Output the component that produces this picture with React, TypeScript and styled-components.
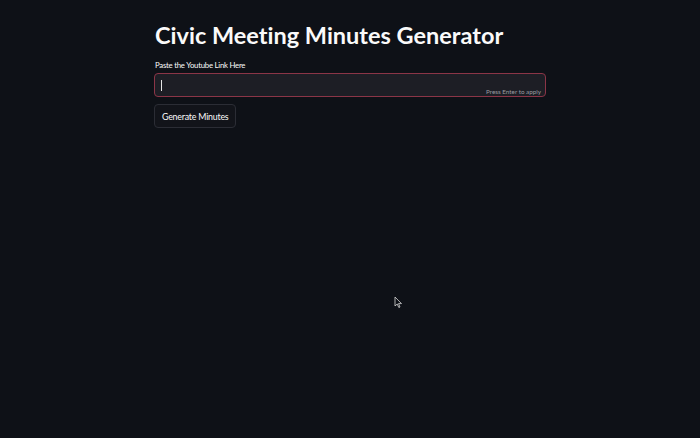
import React from "react";
import styled, { createGlobalStyle } from "styled-components";

const Global = createGlobalStyle`
  html, body { margin: 0; padding: 0; background: #0e1117; }
  body { width: 700px; height: 438px; overflow: hidden; font-family: "Lato", "Open Sans", sans-serif; color: #fafafa; font-variant-ligatures: none; }
`;

const Page = styled.div`
  position: relative;
  width: 700px;
  height: 438px;
  background: #0e1117;
  display: flex;
  justify-content: center;
`;

const Main = styled.main`
  width: 392px;
  padding-top: 20px;
  display: flex;
  flex-direction: column;
`;

const Title = styled.h1`
  margin: 0 0 0 1px;
  font-family: "Lato", sans-serif;
  font-weight: 700;
  font-size: 23.5px;
  line-height: 30px;
  white-space: nowrap;
  font-variant-ligatures: none;
  color: #fafafa;
`;

const Label = styled.label`
  margin-top: 9px;
  margin-left: 1px;
  font-family: "Lato", sans-serif;
  font-size: 7.8px;
  letter-spacing: -0.25px;
  line-height: 12px;
  color: #fafafa;
`;

const InputBox = styled.div`
  margin-top: 2px;
  height: 22px;
  border: 1px solid #8b3547;
  border-radius: 4px;
  background: #1d1e25;
  display: flex;
  align-items: center;
  padding: 0 4px 0 6px;
  position: relative;
`;

const Caret = styled.span`
  width: 1px;
  height: 11px;
  background: #e6e6e6;
`;

const Hint = styled.span`
  position: absolute;
  right: 4px;
  bottom: 1px;
  font-family: "Lato", sans-serif;
  font-size: 6.3px;
  color: #9a9ba0;
`;

const Button = styled.button`
  margin-top: 7px;
  align-self: flex-start;
  height: 24px;
  padding: 0 7px;
  border: 1px solid #2b2d35;
  border-radius: 4px;
  background: #12141a;
  color: #fafafa;
  font-family: "Lato", sans-serif;
  font-size: 8.8px;
  letter-spacing: -0.2px;
`;

const Cursor = styled.svg`
  position: absolute;
  left: 394px;
  top: 296px;
`;

export default function App() {
  return (
    <>
      <Global />
      <Page>
        <Main>
          <Title>Civic Meeting Minutes Generator</Title>
          <Label>Paste the Youtube Link Here</Label>
          <InputBox>
            <Caret />
            <Hint>Press Enter to apply</Hint>
          </InputBox>
          <Button>Generate Minutes</Button>
        </Main>
        <Cursor width="9" height="13" viewBox="0 0 9 13">
          <path d="M1 1 L1 10 L3.2 8 L4.8 11.5 L6 11 L4.5 7.6 L7.5 7.6 Z" fill="#0e1117" stroke="#d8d8d8" strokeWidth="0.8" />
        </Cursor>
      </Page>
    </>
  );
}
